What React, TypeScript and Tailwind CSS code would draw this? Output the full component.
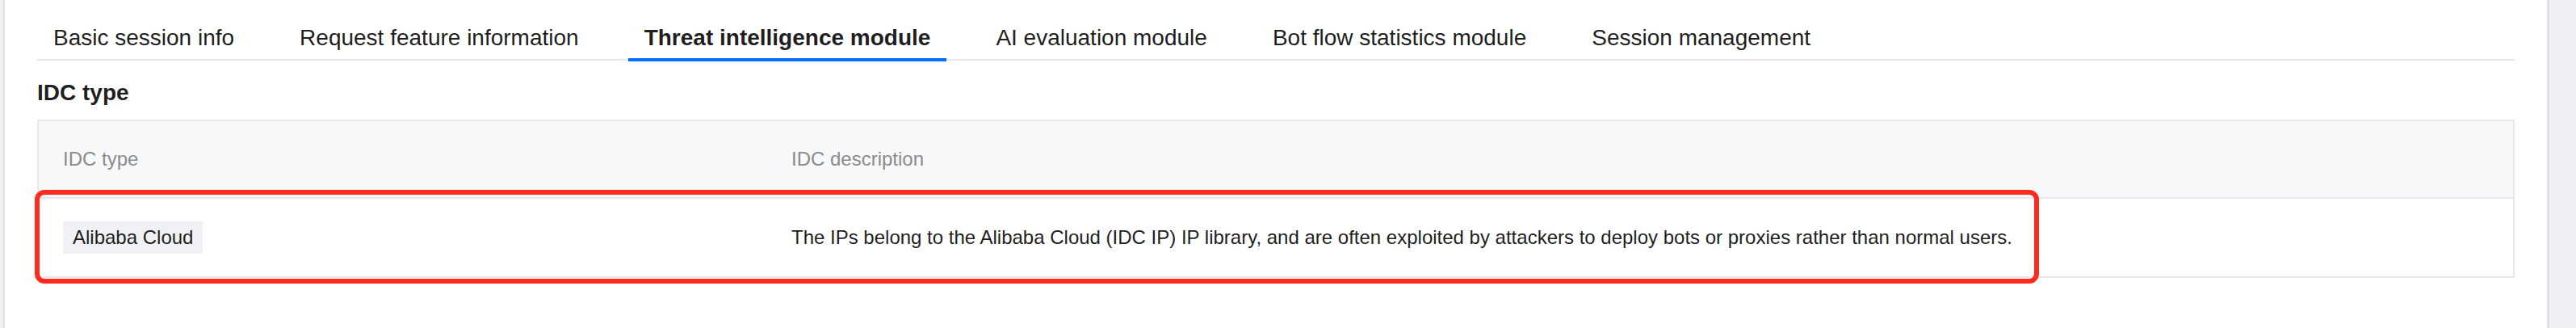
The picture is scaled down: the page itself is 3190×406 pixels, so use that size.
import React from "react";

const tabs = [
  "Basic session info",
  "Request feature information",
  "Threat intelligence module",
  "AI evaluation module",
  "Bot flow statistics module",
  "Session management",
];

export default function App() {
  return (
    <div
      className="w-[3190px] h-[406px] bg-[#eff0f4] flex pl-[4px] pr-[33px] overflow-hidden"
      style={{ fontFamily: '"Liberation Sans", Arial, Helvetica, sans-serif' }}
    >
      <div className="flex-1 bg-white border-l-2 border-r-[3px] border-[#dde0e6] px-[40px] flex flex-col">
        {/* Tabs */}
        <div className="flex gap-[41px] border-b-2 border-[#e5e8ed]">
          {tabs.map((t, i) => {
            const active = i === 2;
            return (
              <div
                key={t}
                className={`relative px-[20px] pt-[27px] pb-[6px] leading-[40px] text-[28px] whitespace-nowrap text-[rgba(0,0,0,0.9)] ${
                  active ? "font-bold" : "font-normal"
                }`}
              >
                {t}
                {active && (
                  <span className="absolute left-0 right-0 bottom-[-3px] h-[4px] bg-[#006eff]" />
                )}
              </div>
            );
          })}
        </div>

        {/* Section heading */}
        <div className="mt-[20px] text-[28px] leading-[40px] font-bold text-[rgba(0,0,0,0.9)]">
          IDC type
        </div>

        {/* Table */}
        <div className="relative mt-[13px]">
          <div className="border-2 border-[#e5e8ed]">
            <div className="flex h-[96px] items-center bg-[#f7f8fa] border-b-2 border-[#e5e8ed] text-[24px] leading-[32px] text-[#8b8b8b]">
              <div className="w-[902px] px-[30px]">IDC type</div>
              <div className="pl-[30px]">IDC description</div>
            </div>
            <div className="flex h-[96px] items-center text-[24px] text-[rgba(0,0,0,0.9)]">
              <div className="w-[902px] px-[30px] flex">
                <span className="h-[40px] px-[12px] flex items-center bg-[#f0f1f4] leading-[32px]">
                  Alibaba Cloud
                </span>
              </div>
              <div className="pl-[30px] leading-[32px] whitespace-nowrap">
                The IPs belong to the Alibaba Cloud (IDC IP) IP library, and are often exploited by attackers to deploy bots or proxies rather than normal users.
              </div>
            </div>
          </div>
          {/* Annotation highlight */}
          <div className="absolute left-[-3px] top-[87px] w-[2482px] h-[116px] border-[6px] border-[#fd2a1e] rounded-[12px] pointer-events-none" />
        </div>
      </div>
    </div>
  );
}
